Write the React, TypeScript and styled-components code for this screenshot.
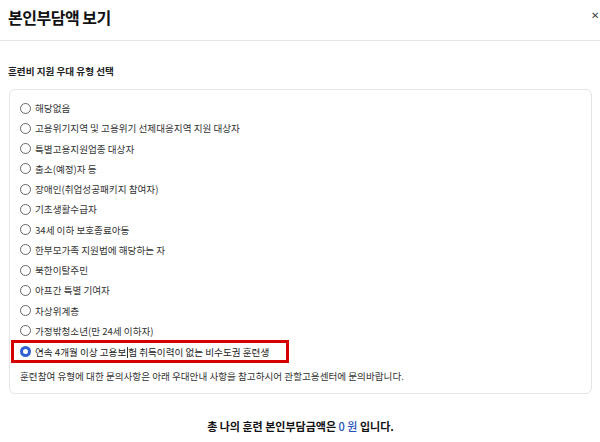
import React from "react";
import styled, { createGlobalStyle } from "styled-components";

const Global = createGlobalStyle`
  html, body { margin: 0; padding: 0; background: #fff; }
  body { font-family: "Noto Sans CJK KR", "Noto Sans", sans-serif; color: #222; overflow: hidden; }
  * { box-sizing: border-box; }
`;

const Page = styled.div`
  width: 600px;
  height: 442px;
  overflow: hidden;
  position: relative;
`;

const Header = styled.div`
  display: flex;
  align-items: center;
  justify-content: space-between;
  height: 41px;
  padding: 0 0 0 8px;
  border-bottom: 1px solid #e6e6e6;
`;

const Title = styled.h1`
  margin: 0;
  font-size: 16px;
  font-weight: 700;
  letter-spacing: -0.5px;
  color: #111;
  line-height: 1;
  margin-top: -6px;
`;

const Close = styled.span`
  font-size: 10px;
  color: #444;
  margin-right: 1px;
  margin-top: -12px;
`;

const Body = styled.div`
  padding: 0 8px 0 9px;
`;

const SectionTitle = styled.h2`
  margin: 23px 0 0 -1px;
  font-size: 9.6px;
  font-weight: 700;
  color: #222;
  line-height: 14px;
`;

const Box = styled.div`
  margin-top: 11px;
  width: 583px;
  border: 1px solid #e4e4e4;
  border-radius: 6px;
  padding: 8px 0 0 0;
  height: 305px;
`;

const List = styled.div`
  display: flex;
  flex-direction: column;
`;

const Row = styled.label<{ $selected?: boolean }>`
  display: flex;
  align-items: center;
  gap: 4px;
  height: 20.25px;
  padding-left: 10px;
  font-size: 9.6px;
  color: #333;
  ${(p) =>
    p.$selected &&
    `
    margin-left: 1px;
    padding-left: 9px;
    width: 278px;
    height: 23px;
    margin-top: -1px;
    border: 3px solid #d50000;
    color: #222;
  `}
`;

const Radio = styled.span<{ $checked?: boolean }>`
  width: 11px;
  height: 11px;
  border-radius: 50%;
  flex: none;
  background: #fff;
  border: ${(p) => (p.$checked ? "3px solid #2f5fd0" : "1px solid #666")};
  margin-left: ${(p) => (p.$checked ? "-3px" : "0")};
`;

const Caret = styled.span`
  display: inline-block;
  width: 1px;
  height: 11px;
  background: #333;
  vertical-align: middle;
  margin: 0 0.5px;
`;

const Note = styled.p`
  margin: 6px 0 0 10px;
  font-size: 9.6px;
  color: #333;
  line-height: 14px;
`;

const Total = styled.p`
  margin: 24px 0 0 0;
  text-align: center;
  font-size: 11px;
  font-weight: 700;
  color: #111;
`;

const Blue = styled.span`
  color: #2452b8;
  font-weight: 500;
`;

const options = [
  "해당없음",
  "고용위기지역 및 고용위기 선제대응지역 지원 대상자",
  "특별고용지원업종 대상자",
  "출소(예정)자 등",
  "장애인(취업성공패키지 참여자)",
  "기초생활수급자",
  "34세 이하 보호종료아동",
  "한부모가족 지원법에 해당하는 자",
  "북한이탈주민",
  "아프간 특별 기여자",
  "차상위계층",
  "가정밖청소년(만 24세 이하자)",
];

export default function App() {
  return (
    <Page>
      <Global />
      <Header>
        <Title>본인부담액 보기</Title>
        <Close>✕</Close>
      </Header>
      <Body>
        <SectionTitle>훈련비 지원 우대 유형 선택</SectionTitle>
        <Box>
          <List>
            {options.map((o) => (
              <Row key={o}>
                <Radio />
                <span>{o}</span>
              </Row>
            ))}
            <Row $selected>
              <Radio $checked />
              <span>
                연속 4개월 이상 고용보<Caret />험 취득이력이 없는 비수도권 훈련생
              </span>
            </Row>
          </List>
          <Note>훈련참여 유형에 대한 문의사항은 아래 우대안내 사항을 참고하시어 관할고용센터에 문의바랍니다.</Note>
        </Box>
        <Total>
          총 나의 훈련 본인부담금액은 <Blue>0 원</Blue> 입니다.
        </Total>
      </Body>
    </Page>
  );
}
